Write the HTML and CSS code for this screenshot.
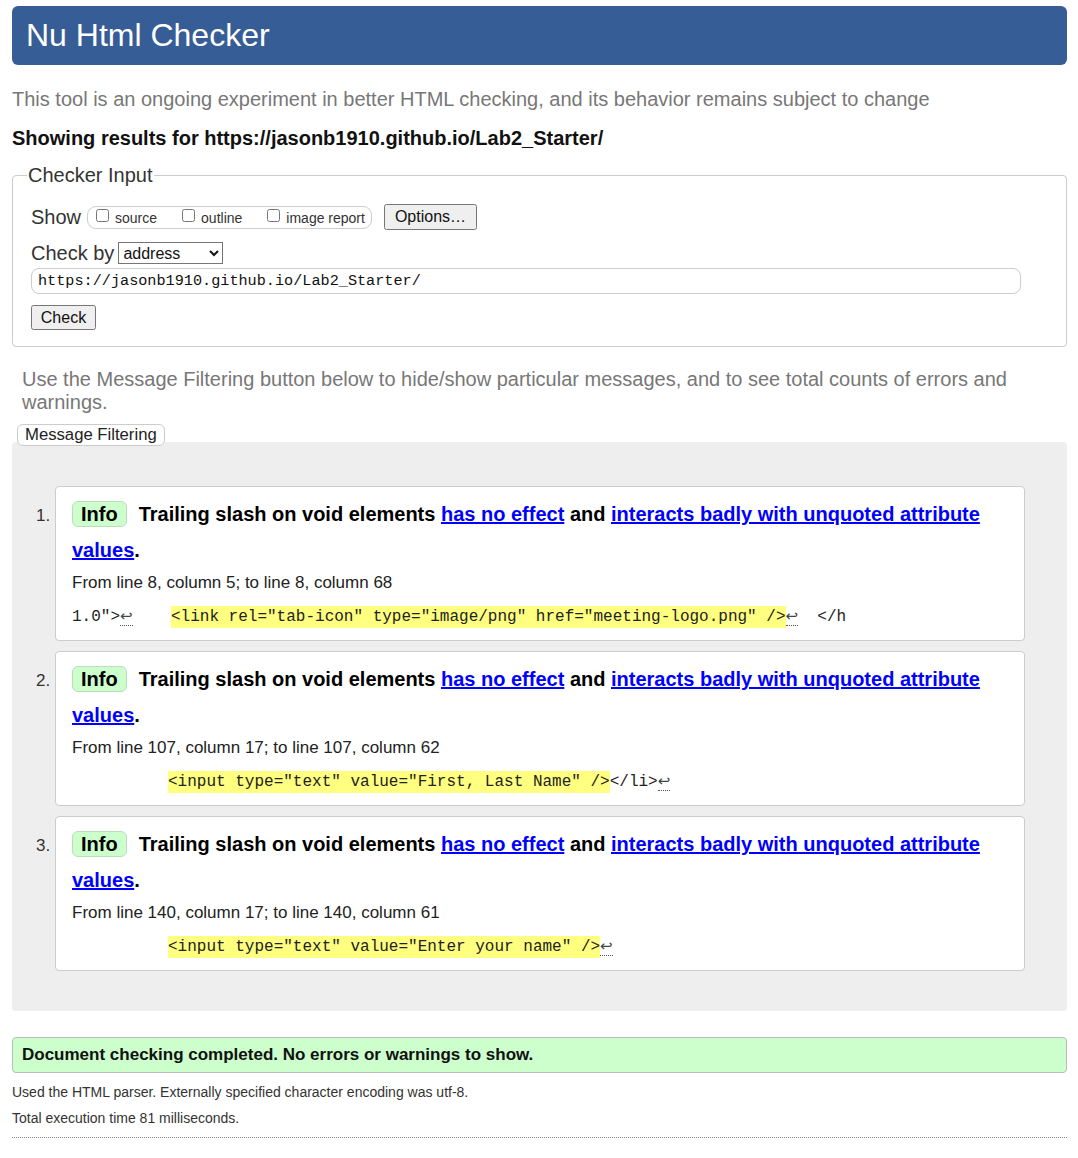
FILE: index.html
```html
<!DOCTYPE html>
<html lang="en">
<head>
<meta charset="utf-8">
<title>Nu Html Checker</title>
<link rel="stylesheet" href="styles.css">
</head>
<body>
<div class="masthead"><h1>Nu Html Checker</h1></div>
<p class="intro">This tool is an ongoing experiment in better HTML checking, and its behavior remains subject to change</p>
<p class="results-for">Showing results for https://jasonb1910.github.io/Lab2_Starter/</p>

<fieldset class="checker">
  <legend>Checker Input</legend>
  <div class="row show-row">
    <span class="big-label">Show</span>
    <span class="opts">
      <label class="opt"><input type="checkbox">source</label>
      <label class="opt"><input type="checkbox">outline</label>
      <label class="opt last"><input type="checkbox">image report</label>
    </span>
    <button type="button" class="options-btn">Options…</button>
  </div>
  <div class="row checkby-row">
    <span class="big-label">Check by</span>
    <select class="checkby"><option>address</option></select>
  </div>
  <input class="url" type="text" value="https://jasonb1910.github.io/Lab2_Starter/">
  <button type="button" class="check-btn">Check</button>
</fieldset>

<p class="filter-note">Use the Message Filtering button below to hide/show particular messages, and to see total counts of errors and warnings.</p>
<button type="button" class="filter-btn">Message Filtering</button>

<div class="results">
  <ol class="messages">
    <li class="card">
      <p class="msg"><span class="badge">Info</span>Trailing slash on void elements <a href="#">has no effect</a> and <a href="#">interacts badly with unquoted attribute values</a>.</p>
      <p class="loc">From line 8, column 5; to line 8, column 68</p>
      <p class="extract">1.0"&gt;<span class="lf">↩</span>    <span class="hl">&lt;link rel="tab-icon" type="image/png" href="meeting-logo.png" /&gt;</span><span class="lf">↩</span>  &lt;/h</p>
    </li>
    <li class="card">
      <p class="msg"><span class="badge">Info</span>Trailing slash on void elements <a href="#">has no effect</a> and <a href="#">interacts badly with unquoted attribute values</a>.</p>
      <p class="loc">From line 107, column 17; to line 107, column 62</p>
      <p class="extract">          <span class="hl">&lt;input type="text" value="First, Last Name" /&gt;</span>&lt;/li&gt;<span class="lf">↩</span></p>
    </li>
    <li class="card">
      <p class="msg"><span class="badge">Info</span>Trailing slash on void elements <a href="#">has no effect</a> and <a href="#">interacts badly with unquoted attribute values</a>.</p>
      <p class="loc">From line 140, column 17; to line 140, column 61</p>
      <p class="extract">          <span class="hl">&lt;input type="text" value="Enter your name" /&gt;</span><span class="lf">↩</span></p>
    </li>
  </ol>
</div>

<p class="done">Document checking completed. No errors or warnings to show.</p>
<p class="meta first">Used the HTML parser. Externally specified character encoding was utf-8.</p>
<p class="meta">Total execution time 81 milliseconds.</p>
<hr class="end">
</body>
</html>
```

FILE: styles.css
```css
body {
  margin: 0;
  padding: 6px 11px 10px 12px;
  font-family: "Liberation Sans", Arial, sans-serif;
  color: #000;
  background: #fff;
}

.masthead h1 {
  margin: 0;
  height: 59px;
  line-height: 59px;
  padding-left: 14px;
  background: #365d95;
  color: #fff;
  font-size: 32px;
  font-weight: normal;
  border-radius: 6px;
}

.intro {
  margin: 23px 0 0;
  font-size: 20px;
  line-height: 23px;
  color: #777;
}

.results-for {
  margin: 16px 0 0;
  font-size: 20px;
  line-height: 23px;
  font-weight: bold;
  color: #111;
}

.checker {
  margin: 14px 0 0;
  padding: 17px 45px 16px 18px;
  border: 1px solid #ccc;
  border-radius: 4px;
  min-width: 0;
}

.checker legend {
  font-size: 20px;
  line-height: 23px;
  color: #333;
  padding: 0 1px;
  margin-left: -4px;
}

.row {
  display: flex;
  align-items: center;
}

.show-row {
  height: 26px;
}

.big-label {
  font-size: 20px;
  line-height: 23px;
  color: #333;
}

.opts {
  display: inline-flex;
  align-items: center;
  height: 21px;
  margin-left: 6px;
  padding: 0 6px 0 4px;
  border: 1px solid #ccc;
  border-radius: 9px;
  font-size: 14px;
  color: #333;
}

.opt {
  line-height: 21px;
  margin-right: 21px;
}

.opt.last {
  margin-right: 0;
}

.opt input {
  margin: 3px 6px 3px 4px;
  width: 13px;
  height: 13px;
  vertical-align: 1px;
}

.options-btn {
  margin-left: 12px;
  height: 26px;
  padding: 0 9px;
  font-family: "Liberation Sans", Arial, sans-serif;
  font-size: 16px;
  color: #111;
}

.checkby-row {
  margin-top: 12px;
  height: 22px;
}

.checkby {
  margin-left: 4px;
  width: 105px;
  height: 22px;
  font-family: "Liberation Sans", Arial, sans-serif;
  font-size: 16px;
  color: #111;
  background: #fff;
  border: 1px solid #767676;
}

.url {
  display: block;
  box-sizing: border-box;
  width: 100%;
  height: 26px;
  margin-top: 4px;
  padding: 0 6px;
  border: 1px solid #ccc;
  border-radius: 8px;
  font-family: "Liberation Mono", "DejaVu Sans Mono", monospace;
  font-size: 15.2px;
  color: #111;
}

.check-btn {
  display: block;
  margin-top: 11px;
  width: 65px;
  height: 25px;
  padding: 0;
  font-family: "Liberation Sans", Arial, sans-serif;
  font-size: 16px;
  color: #111;
}

.filter-note {
  margin: 21px 0 0;
  padding-left: 10px;
  font-size: 20px;
  line-height: 23px;
  color: #777;
}

.filter-btn {
  display: block;
  position: relative;
  z-index: 1;
  margin: 10px 0 -4px 5px;
  height: 22px;
  padding: 0 7px;
  background: #fff;
  border: 1px solid #ccc;
  border-radius: 6px;
  font-family: "Liberation Sans", Arial, sans-serif;
  font-size: 16.7px;
  color: #222;
}

.results {
  background: #eee;
  border-radius: 4px;
  padding: 44px 42px 40px 43px;
}

.messages {
  margin: 0;
  padding: 0;
}

.card {
  background: #fff;
  border: 1px solid #ccc;
  border-radius: 4px;
  padding: 9px 16px 11px;
  font-size: 17px;
  color: #333;
}

.card + .card {
  margin-top: 10px;
}

.msg {
  margin: 0;
  font-size: 20px;
  line-height: 36px;
  font-weight: bold;
  color: #000;
}

.msg a {
  color: #00f;
  text-decoration: underline;
}

.badge {
  display: inline-block;
  line-height: 24px;
  padding: 0 8px;
  margin-right: 12px;
  background: #ccffcc;
  border: 1px solid #bcdcbc;
  border-radius: 6px;
  color: #000;
}

.loc {
  margin: 5px 0 0;
  font-size: 17px;
  line-height: 20px;
  color: #222;
}

.extract {
  margin: 11px 0 0;
  font-family: "Liberation Mono", "DejaVu Sans Mono", monospace;
  font-size: 16px;
  line-height: 24px;
  white-space: pre;
  color: #222;
}

.hl {
  background: #ffff80;
  padding: 2px 0;
}

.lf {
  font-family: "DejaVu Sans", sans-serif;
  font-size: 15px;
  color: #444;
  border-bottom: 1px dotted #555;
}

.done {
  margin: 26px 0 0;
  padding: 0 9px;
  line-height: 34px;
  background: #ccffcc;
  border: 1px solid #bbb;
  border-radius: 4px;
  font-size: 17px;
  font-weight: bold;
  color: #111;
}

.meta {
  margin: 10px 0 0;
  font-size: 14px;
  line-height: 16px;
  color: #333;
}

.meta.first {
  margin-top: 11px;
}

.end {
  margin: 11px 0 0;
  border: 0;
  border-top: 1px dotted #888;
  height: 0;
}
```
